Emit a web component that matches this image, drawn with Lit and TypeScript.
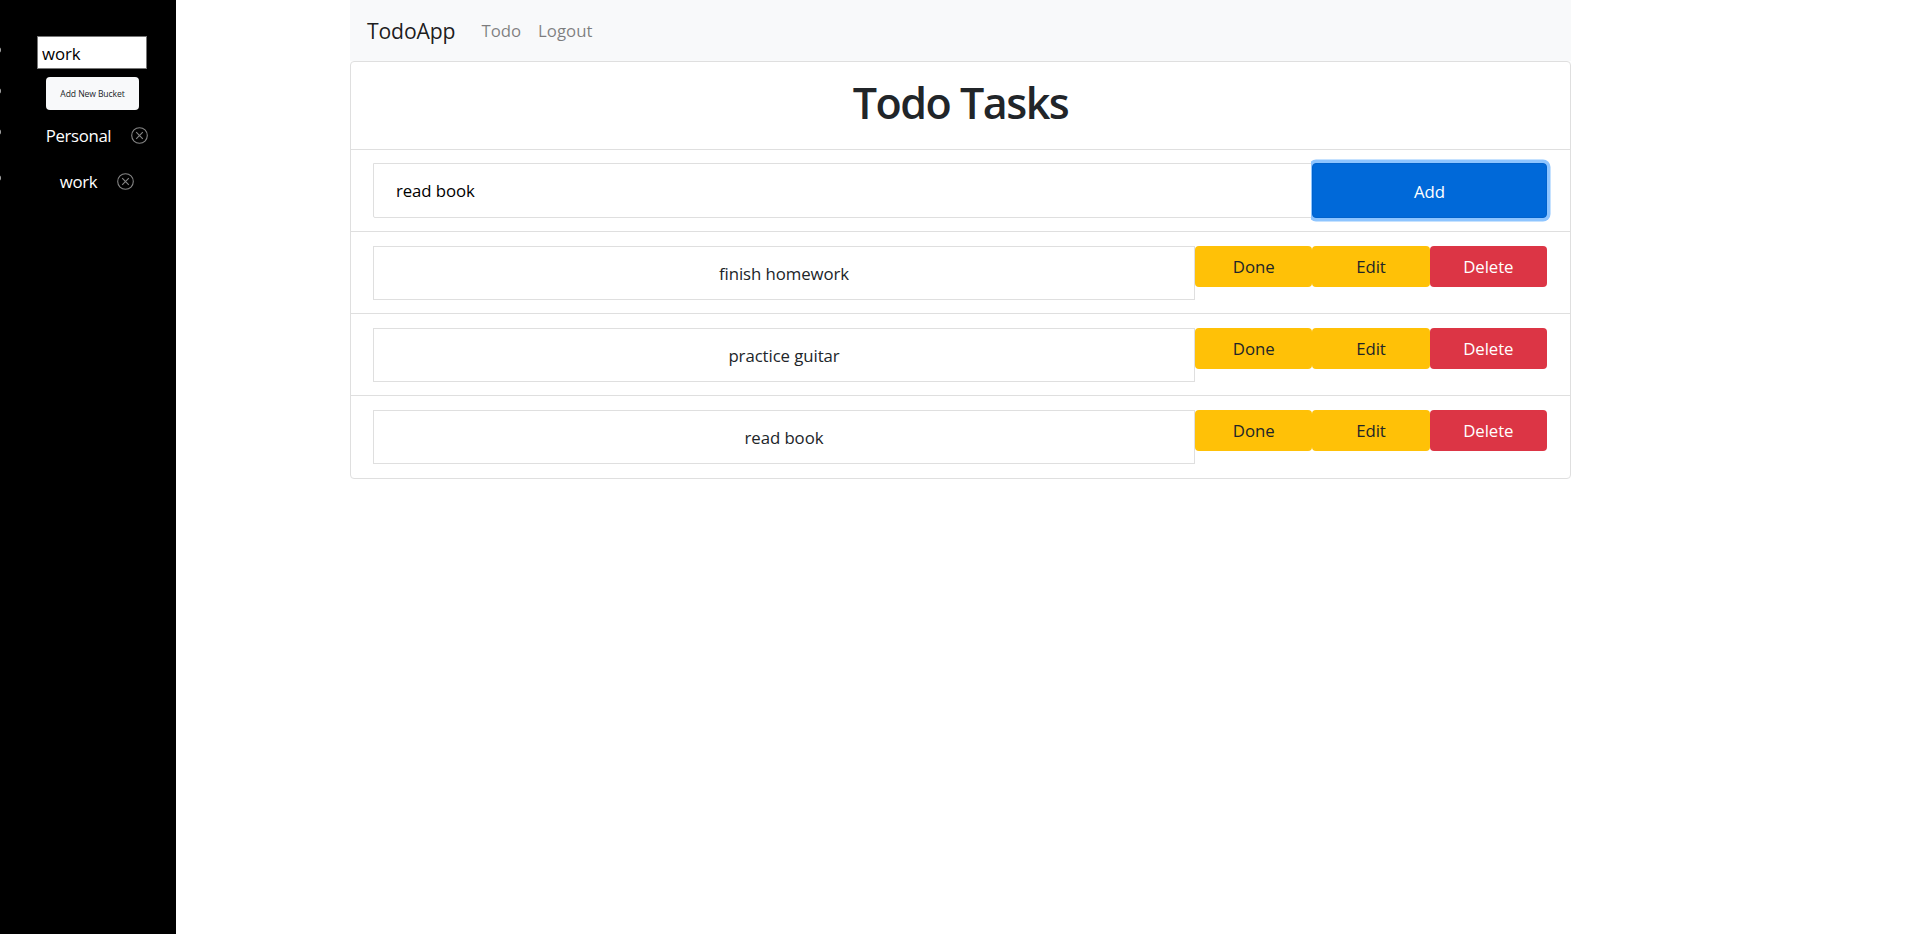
import { LitElement, html, css } from "lit";
import { customElement, property, state } from "lit/decorators.js";

const shared = css`
  * { box-sizing: border-box; }
  button, input { font: inherit; letter-spacing: inherit; margin: 0; outline: none; }
`;

@customElement("bucket-sidebar")
class BucketSidebar extends LitElement {
  @property({ type: Array }) buckets: string[] = [];
  static styles = [shared, css`
    :host { display: block; width: 176px; height: 934px; background: #000; color: #fff; overflow: hidden; flex: none; }
    .list { list-style: none; margin: 0; padding: 36px 0 0; }
    .row { position: relative; display: flex; justify-content: center; align-items: center; }
    .row::before { content: ""; position: absolute; left: -5px; top: var(--dot, 11px); width: 6px; height: 6px; border-radius: 50%; background: #aaa; }
    .field { height: 41px; padding-left: 8px; align-items: flex-start; }
    .name { width: 110px; height: 33px; border: 1px solid #767676; padding: 2px 4px 0; background: #fff; color: #000; border-radius: 0; }
    .create { height: 41px; padding-left: 9px; align-items: flex-start; --dot: 11px; }
    .new { width: 93px; height: 33px; border: 0; border-radius: 4px; padding: 0; background: #f8f9fa; color: #212529; font-size: 8.6px; letter-spacing: -0.1px; }
    .bucket { height: 36px; margin-bottom: 10px; padding-left: 18px; gap: 20px; --dot: 11px; }
    .label { letter-spacing: -0.35px; }
    .icon { display: block; width: 17px; height: 17px; margin-top: -1px; fill: none; stroke: #858585; stroke-width: 1.1; }
  `];
  render() {
    return html`<ul class="list">
      <li class="row field"><input class="name" .value=${"work"}></li>
      <li class="row create"><button class="new">Add New Bucket</button></li>
      ${this.buckets.map((b) => html`<li class="row bucket"><span class="label">${b}</span>
        <svg class="icon" viewBox="0 0 17 17"><circle cx="8.5" cy="8.5" r="7.8"/><path d="M5.2 5.2l6.6 6.6M11.8 5.2l-6.6 6.6"/></svg></li>`)}
    </ul>`;
  }
}

@customElement("app-root")
class AppRoot extends LitElement {
  @state() tasks = ["finish homework", "practice guitar", "read book"];
  static styles = [shared, css`
    :host { display: flex; width: 1920px; height: 934px; overflow: hidden; background: #fff; color: #212529; font-family: "Open Sans", "Noto Sans", sans-serif; font-size: 16.8px; line-height: 26px; letter-spacing: -0.08px; }
    .main { width: 1221px; margin-left: 174px; }
    .nav { height: 61px; background: #f8f9fa; display: flex; align-items: center; padding-left: 17px; }
    .brand { font-size: 21.2px; color: rgba(0,0,0,.9); margin-right: 26px; letter-spacing: -0.15px; }
    .link { color: rgba(0,0,0,.5); margin-right: 17px; letter-spacing: 0; }
    .card { border: 1px solid #dfdfdf; border-radius: 4px; height: 418px; }
    .head { height: 87px; display: flex; justify-content: center; padding-top: 14px; }
    .title { margin: 0; font-size: 43px; font-weight: 560; line-height: 53px; letter-spacing: -1.5px; }
    .row { border-top: 1px solid #dfdfdf; height: 82px; padding: 14px 23px 0 22px; display: flex; align-items: flex-start; }
    .form { padding-top: 13px; }
    .entry { width: 939px; height: 55px; border: 1px solid #dfdfdf; border-radius: 0 0 0 2px; padding: 0 22px; color: #000; background: #fff; }
    .task { width: 822px; height: 54px; border: 1px solid #dfdfdf; text-align: center; padding-top: 14px; }
    .btn { flex: 1; height: 41px; border: 0; border-radius: 4px; padding: 0; background: #ffc107; color: #212529; }
    .danger { background: #dc3545; color: #fff; }
    .add { height: 55px; padding-top: 2px; background: #0069d9; color: #fff; box-shadow: 0 0 0 3.5px #8ec5ff; clip-path: inset(-4px -4px -4px -1px); border: 1px solid #0062cc; }
  `];
  render() {
    return html`
      <bucket-sidebar .buckets=${["Personal", "work"]}></bucket-sidebar>
      <div class="main">
        <nav class="nav"><span class="brand">TodoApp</span><span class="link">Todo</span><span class="link">Logout</span></nav>
        <section class="card">
          <header class="head"><h1 class="title">Todo Tasks</h1></header>
          <div class="row form"><input class="entry" .value=${"read book"}><button class="btn add">Add</button></div>
          ${this.tasks.map((t) => html`<div class="row"><div class="task">${t}</div>
            <button class="btn">Done</button><button class="btn">Edit</button><button class="btn danger">Delete</button></div>`)}
        </section>
      </div>`;
  }
}
